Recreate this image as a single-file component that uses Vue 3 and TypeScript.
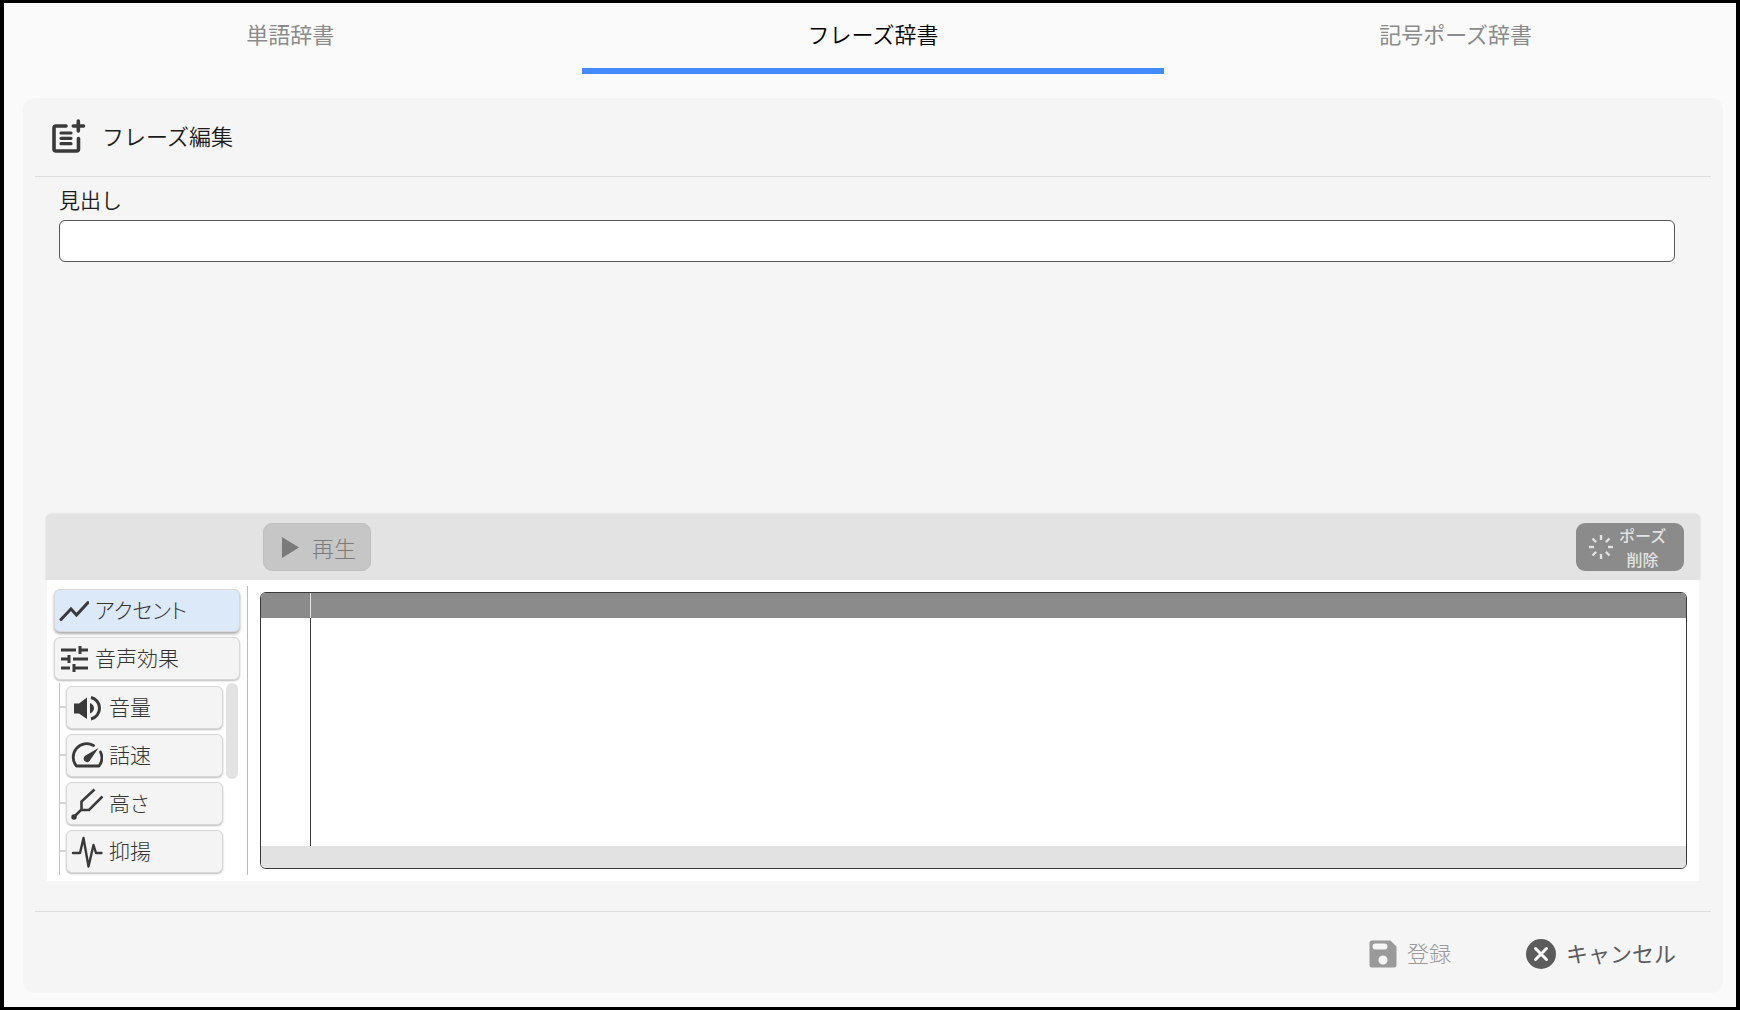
<script setup lang="ts">
import { ref } from 'vue'

type Tab = { id: string; label: string }

const tabs: Tab[] = [
  { id: 'word', label: '単語辞書' },
  { id: 'phrase', label: 'フレーズ辞書' },
  { id: 'symbol', label: '記号ポーズ辞書' },
]
const activeTab = ref('phrase')
const heading = ref('')
const mode = ref('accent')

const effects = [
  { id: 'volume', label: '音量' },
  { id: 'speed', label: '話速' },
  { id: 'pitch', label: '高さ' },
  { id: 'intonation', label: '抑揚' },
]
const rays = [0, 45, 90, 135, 180, 225, 270, 315]
</script>

<template>
  <div class="window">
    <div class="tabs" role="tablist">
      <button
        v-for="tab in tabs"
        :key="tab.id"
        type="button"
        role="tab"
        class="tab"
        :class="{ active: activeTab === tab.id }"
        :aria-selected="activeTab === tab.id"
        @click="activeTab = tab.id"
      >{{ tab.label }}</button>
    </div>

    <main class="panel">
      <header class="panel-head">
        <svg width="34" height="34" viewBox="0 0 34 34" fill="none" stroke="#3a3a3a" stroke-linecap="round">
          <path d="M14 7H4Q2 7 2 9V30Q2 32 4 32H24.500Q26.500 32 26.500 30V19.500" stroke-width="3.600" />
          <path d="M9 14H19M9 19.300H19M9 24.700H19" stroke-width="3.200" />
          <path d="M26.300 2V12M21.300 7H31.500" stroke-width="3.600" />
        </svg>
        <h1>フレーズ編集</h1>
      </header>

      <div class="field">
        <label for="heading">見出し</label>
        <input id="heading" v-model="heading" type="text" />
      </div>

      <section class="editor">
        <div class="toolbar">
          <button type="button" class="play" disabled>
            <svg width="18" height="22" viewBox="0 0 18 22"><path d="M0 0L17 10.500L0 21Z" fill="#7b7b7b" /></svg>
            <span>再生</span>
          </button>
          <button type="button" class="pause" disabled>
            <svg width="24" height="24" viewBox="0 0 24 24" stroke="#e2e2e2" stroke-width="2.400">
              <path v-for="angle in rays" :key="angle" d="M12 0V5" :transform="`rotate(${angle} 12 12)`" />
            </svg>
            <span>ポーズ<br />削除</span>
          </button>
        </div>

        <div class="workspace">
          <nav class="side">
            <button type="button" class="mode" :class="{ selected: mode === 'accent' }" @click="mode = 'accent'">
              <svg width="30" height="30" viewBox="0 0 30 30" fill="none" stroke="#3a3a3a" stroke-width="3">
                <path d="M2 23.500L12 13L17.500 19L29 6.500" stroke-linecap="round" />
              </svg>
              <span>アクセント</span>
            </button>
            <button type="button" class="mode" :class="{ selected: mode === 'effect' }" @click="mode = 'effect'">
              <svg width="30" height="30" viewBox="0 0 30 30" fill="none" stroke="#3a3a3a" stroke-width="3">
                <path d="M2 6H17M21 6H29M21 2V10M2 15H10M10 11V19M14 15H29M2 24H11M15 24H29M15 20V28" />
              </svg>
              <span>音声効果</span>
            </button>
            <div class="tree">
              <ul>
                <li v-for="item in effects" :key="item.id">
                  <button type="button" class="mode" :class="{ selected: mode === item.id }" @click="mode = item.id">
                    <svg v-if="item.id === 'volume'" width="32" height="32" viewBox="0 0 32 32">
                      <path d="M3 11.500H8L16 5.500V27L8 21.500H3Z" fill="#3a3a3a" />
                      <path d="M19 11Q23 13 23 16.200T19 21.500Z" fill="#3a3a3a" />
                      <path d="M20 5.500C25 6.500 28.500 11 28.500 16.200S25 26 20 27" fill="none" stroke="#3a3a3a" stroke-width="3" />
                    </svg>
                    <svg v-else-if="item.id === 'speed'" width="32" height="32" viewBox="0 0 32 32">
                      <path d="M22.500 5.500A13.500 13.500 0 0 0 5.500 26H28A13.500 13.500 0 0 0 29.500 12" fill="none" stroke="#3a3a3a" stroke-width="2.800" stroke-linejoin="round" stroke-linecap="round" />
                      <path d="M27.500 8L19.500 19.500A3.500 3.500 0 1 1 14.500 15.500Z" fill="#3a3a3a" />
                    </svg>
                    <svg v-else-if="item.id === 'pitch'" width="32" height="32" viewBox="0 0 32 32" fill="none" stroke="#3a3a3a" stroke-width="2.600">
                      <circle cx="3" cy="29" r="2.700" fill="#3a3a3a" stroke="none" />
                      <path d="M2.500 29.500L10.500 21.500V13.500L23.500 1.500M10.500 22H18L31.500 8.500" />
                    </svg>
                    <svg v-else width="32" height="32" viewBox="0 0 32 32" fill="none" stroke="#3a3a3a" stroke-width="2.400" stroke-linejoin="round" stroke-linecap="round">
                      <path d="M2 17H9L12.500 2L17.500 30.500L22.500 9L25 17H30.500" />
                    </svg>
                    <span>{{ item.label }}</span>
                  </button>
                </li>
              </ul>
              <div class="thumb"></div>
            </div>
          </nav>

          <div class="graph">
            <div class="graph-head"><div class="axis"></div></div>
            <div class="graph-body"><div class="axis"></div></div>
            <div class="graph-foot"></div>
          </div>
        </div>
      </section>

      <footer class="actions">
        <button type="button" class="save" disabled>
          <svg width="28" height="28" viewBox="0 0 28 28">
            <path fill="#9a9a9a" fill-rule="evenodd" d="M3 .500H21.500L27.500 6.500V25Q27.500 27.500 25 27.500H3Q.500 27.500 .500 25V3Q.500 .500 3 .500ZM6.500 3.500A3 3 0 0 0 6.500 9.500H15.500A3 3 0 0 0 15.500 3.500ZM14 15.500A4.500 4.500 0 1 0 14.010 15.500Z" />
          </svg>
          <span>登録</span>
        </button>
        <button type="button" class="cancel">
          <svg width="30" height="30" viewBox="0 0 30 30">
            <circle cx="15" cy="15" r="15" fill="#5c5c5c" />
            <path d="M9.500 9.500L20.500 20.500M20.500 9.500L9.500 20.500" stroke="#fff" stroke-width="3" stroke-linecap="round" />
          </svg>
          <span>キャンセル</span>
        </button>
      </footer>
    </main>
  </div>
</template>

<style>
body {
  margin: 0;
  background: #000;
}
</style>

<style scoped>
* {
  box-sizing: border-box;
}
svg {
  display: block;
  flex: none;
}
button {
  font: inherit;
  border: 0;
  margin: 0;
  padding: 0;
  background: none;
  color: inherit;
}
.window {
  display: flex;
  flex-direction: column;
  min-height: 100vh;
  border: solid #000;
  border-width: 3px 4px;
  background: #fafafa;
  overflow: hidden;
  font-family: "Noto Sans CJK JP", sans-serif;
  font-size: 22px;
  font-weight: 300;
  line-height: 32px;
  color: #1c1c1c;
}
.tabs {
  display: grid;
  grid-template-columns: repeat(3, 1fr);
  margin: 0 -11px 0 -5px;
}
.tab {
  height: 71px;
  padding-bottom: 6px;
  border-bottom: 6px solid transparent;
  color: #8b8b8b;
  font-weight: 400;
}
.tab.active {
  color: #000;
  font-weight: 350;
  border-bottom-color: #448aff;
}
.panel {
  flex: 1;
  display: flex;
  flex-direction: column;
  margin: 24px 13px 14px 19px;
  padding: 0 12px;
  border-radius: 12px;
  background: #f5f5f5;
}
.panel-head {
  display: flex;
  align-items: center;
  gap: 16px;
  height: 79px;
  padding: 0 17px 2px;
  border-bottom: 1px solid #dcdcdc;
}
h1 {
  margin: 0;
  padding-bottom: 2px;
  font-size: 22px;
  font-weight: 350;
}
.field {
  display: flex;
  flex-direction: column;
  padding: 7px 36px 0 24px;
}
.field label {
  font-size: 21px;
  font-weight: 350;
  line-height: 30px;
}
.field input {
  height: 42px;
  margin-top: 6px;
  padding: 0 12px;
  border: 1px solid #555;
  border-radius: 6px;
  background: #fff;
  font: inherit;
}
.editor {
  margin: auto 11px 30px;
}
.toolbar {
  display: flex;
  justify-content: space-between;
  align-items: center;
  height: 66px;
  padding: 0 16px 0 217px;
  border-radius: 6px 6px 0 0;
  background: #e3e3e3;
  box-shadow: 0 0 2px #ccc;
}
.toolbar button {
  display: flex;
  align-items: center;
  width: 108px;
  height: 48px;
  border-radius: 9px;
}
.play {
  gap: 12px;
  padding-left: 18px;
  border: 1px solid #bfbfbf;
  background: #c6c6c6;
  color: #7b7b7b;
}
.play svg {
  margin-top: 2px;
}
.pause {
  gap: 6px;
  padding-left: 13px;
  background: #8b8b8b;
  color: #e2e2e2;
  font-size: 16px;
  font-weight: 500;
  line-height: 24px;
  text-align: center;
}
.workspace {
  position: relative;
  display: flex;
  margin: 0 1px;
  padding: 6px 12px 6px 7px;
  background: #fff;
}
.side {
  display: flex;
  flex-direction: column;
  gap: 5px;
  width: 194px;
  padding-top: 3px;
  border-right: 1px solid #bbb;
}
.mode {
  display: flex;
  align-items: center;
  gap: 6px;
  width: 186px;
  height: 43px;
  padding-left: 4px;
  border: 1px solid #d8d8d8;
  border-radius: 6px;
  background: #f4f4f4;
  box-shadow: 0 1px 2px #bbb;
  font-size: 21px;
  font-feature-settings: "palt";
  color: #333;
}
.mode span,
.actions span {
  padding-bottom: 4px;
}
.mode.selected {
  background: #dce9f9;
  box-shadow: 0 2px 3px #aaa;
}
.tree {
  display: flex;
  gap: 3px;
  margin: -2px 0 0 5px;
}
.tree ul {
  display: flex;
  flex-direction: column;
  gap: 5px;
  margin: 0;
  padding: 3px 0 2px 6px;
  border-left: 1px solid #c4c4c4;
  list-style: none;
}
.tree li {
  position: relative;
}
.tree li::before {
  content: "";
  position: absolute;
  left: -6px;
  top: 20px;
  width: 6px;
  height: 2px;
  background: #d4d4d4;
}
.tree .mode {
  width: 157px;
}
.thumb {
  width: 12px;
  height: 96px;
  border-radius: 6px;
  background: #e2e2e2;
}
.graph {
  flex: 1;
  display: flex;
  flex-direction: column;
  height: 277px;
  margin: 6px 0 0 12px;
  border: 1px solid #3a3a3a;
  border-radius: 6px;
  overflow: hidden;
}
.graph-head {
  height: 25px;
  background: #8b8b8b;
}
.graph-body {
  flex: 1;
}
.graph-foot {
  height: 22px;
  background: #e2e2e2;
}
.axis {
  width: 50px;
  height: 100%;
  border-right: 1px solid #3a3a3a;
}
.graph-head .axis {
  border-color: #e2e2e2;
}
.actions {
  display: flex;
  justify-content: flex-end;
  align-items: center;
  gap: 75px;
  height: 82px;
  padding: 2px 35px 0 0;
  border-top: 1px solid #dcdcdc;
}
.actions button {
  display: flex;
  align-items: center;
  gap: 10px;
}
.save {
  color: #9a9a9a;
}
.cancel {
  color: #5c5c5c;
  font-weight: 400;
}
</style>
